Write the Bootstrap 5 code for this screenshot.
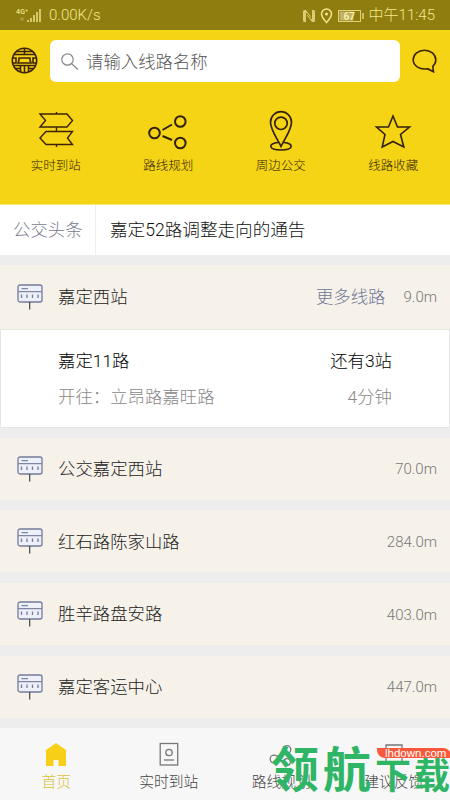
<!DOCTYPE html>
<html lang="zh-CN">
<head>
<meta charset="utf-8">
<meta name="viewport" content="width=device-width, initial-scale=1">
<title>嘉定公交</title>
<link rel="stylesheet" href="https://cdn.jsdelivr.net/npm/bootstrap@5.3.0/dist/css/bootstrap.min.css">
<style>
body{font-family:Roboto,"Noto Sans CJK SC",sans-serif;font-size:17.4px;line-height:1;font-weight:300;color:#222;background:#ededed}
svg{display:block;fill:none;flex:none}
.app{width:450px;height:800px}
.status{height:30px;background:#8f7d0f;color:#f3e78c;padding:2px 15px 0 16px;font-size:15px}
.hero{height:175px;background:#f5d415;color:#33230a;border-bottom:1px solid #fbe96a}
.search{width:350px;height:42px;border-radius:6px;color:#555;padding:3px 0 0 11px;gap:7px}
.search-row{padding:10px 13px 0 11px;height:52px}
.shortcuts{padding-top:25px;font-size:12.5px}
.shortcuts .item{width:112.5px;padding-right:1px}
.shortcuts .item span{margin-top:9px}
.shortcuts svg{height:44px}
.news{height:50px;margin-bottom:10px}
.news .tag{width:96px;padding:2px 0 0 13px;color:#77798f;border-right:1px solid #eee}
.news .title{padding:2px 0 0 14px;color:#111;font-size:17.6px}
.stop{height:62px;background:#f6f2ea;padding:0 13px 0 17px;margin-bottom:10.6px}
.stop span{padding-top:2px}
.stop.open{height:64px;margin:0}
.stop .name{margin-left:15px}
.more{color:#6f7696;margin-right:18px}
.dist{color:#777;font-size:15px}
.line-card{height:99px;border:1px solid #e6e6e6;padding:23px 57px 0 57px;margin-bottom:10px}
.line-card .route{color:#000}
.line-card .sub{color:#888;margin-top:19px}
.tabs{height:72px;background:#f7f7f7;font-size:14.8px;color:#444}
.tabs .item{width:112.5px;padding-top:13px}
.tabs .item span{margin-top:9px}
.tabs .on{color:#d8c235}
.wm{left:271px;top:743px;font-size:48px;line-height:55px;font-weight:700;color:#2fb566;width:179px;height:57px;white-space:nowrap}
.wm i{flex:none;width:52px;font-style:normal}
.wm i.low{width:39px;font-size:36px;padding-top:7px}
.wm-tag{left:377px;top:748px;width:74px;height:10px;background:#f9583a;color:#fff;font:11.5px/10px "Liberation Sans",sans-serif;padding-left:8px;border-radius:0 8px 0 8px}
</style>
<script src="https://cdn.jsdelivr.net/npm/bootstrap@5.3.0/dist/js/bootstrap.bundle.min.js"></script>
</head>
<body>
<svg width="0" height="0" class="position-absolute">
<symbol id="sign" viewBox="0 0 26 26"><rect x="1" y="1" width="24" height="17" rx="2" fill="#edf0f8" stroke="#747b9b" stroke-width="1.3"/><path d="M1 7.700H25M4.500 4.700H11" stroke="#7f86a4" stroke-width="1.200"/><path d="M4.500 10.500V14M10 10.500V14M15.500 10.500V14M21 10.500V14" stroke="#747b9b" stroke-width="1.300"/><path d="M12.700 18V25.500" stroke="#444" stroke-width="1.200"/></symbol>
</svg>
<div class="app d-flex flex-column position-relative overflow-hidden">
<div class="status d-flex align-items-center justify-content-between">
 <div class="d-flex align-items-center">
  <svg width="27" height="18" viewBox="0 0 27 18"><text x="0" y="6.500" font-size="7" font-weight="500" fill="#f3e78c" textLength="12">4G⁺</text><path d="M12 13V15M15 11V15M18 8V15M21 5V15M24 2V15" stroke="#f3e78c" stroke-width="1.400"/><circle cx="6" cy="12" r="2" fill="#a99637"/></svg>
  <span style="margin-left:6px">0.00K/s</span>
 </div>
 <div class="d-flex align-items-center">
  <svg width="14" height="14" viewBox="0 0 14 14"><path d="M4 1H2.500Q1 1 1 2.500V11.500Q1 13 2.500 13H4V5L10 13H11.500Q13 13 13 11.500V2.500Q13 1 11.500 1H10V9L4 1Z" fill="#dccd72"/><path d="M4.500 12V4L9.500 10V2" stroke="#8f7d0f" stroke-width="1"/></svg>
  <svg class="ms-1" width="13" height="16" viewBox="0 0 13 16"><path d="M6.500 14.500C4 11.500 1.500 9 1.500 6A5 5 0 0 1 11.500 6C11.500 9 9 11.500 6.500 14.500Z" stroke="#f3e78c" stroke-width="1.500"/><circle cx="6.500" cy="6" r="1.500" fill="#f3e78c"/></svg>
  <svg class="ms-1" width="28" height="14" viewBox="0 0 28 14"><rect x="1.500" y="1.500" width="22" height="11" stroke="#e0d27b"/><rect x="2.500" y="2.500" width="14" height="9" fill="#c2b367"/><path d="M26 4V10" stroke="#e0d27b" stroke-width="1.500"/><text x="6.500" y="10.800" font-size="10" font-weight="500" fill="#fff5b0">67</text></svg>
  <span style="margin-left:4px">中午11:45</span>
 </div>
</div>
<header class="hero">
 <div class="search-row d-flex align-items-center justify-content-between">
  <svg width="27" height="27" viewBox="0 0 27 27" stroke="#3c2206" stroke-width="1.600"><circle cx="13.500" cy="13.500" r="12.200"/><path d="M13.500 1V7.500M5 4.500H22M3 7.500H24M2 11H5V16H2M25 11H22V16H25M8 11H19V13L20 16H7L8 13ZM3 18.500H24M5 21.500H10M13.500 18.500V26M17 21.500H22M9.500 19V25M17.500 19V25"/></svg>
  <div class="search bg-white d-flex align-items-center">
   <svg width="18" height="18" viewBox="0 0 18 18" stroke="#888" stroke-width="1.200"><circle cx="6.500" cy="6.500" r="5.700"/><path d="M10.700 10.700L17 16.500"/></svg>
   <span>请输入线路名称</span>
  </div>
  <svg width="25" height="25" viewBox="0 0 25 25"><path d="M21.500 23.800L20.800 18.300C22.800 16.500 23.800 14.500 23.800 12C23.800 6.300 18.500 2.200 12.500 2.200S1.200 6.300 1.200 11.800C1.200 18 8 22 15.500 20.700Z" stroke="#3c2206" stroke-width="1.600"/></svg>
 </div>
 <div class="shortcuts d-flex">
  <div class="item d-flex flex-column align-items-center">
   <svg width="38" height="44" viewBox="0 0 38 44" stroke="#3c2206" stroke-width="1.400"><path d="M3 7H30L35.500 13.500L30 20H3L8.500 13.500ZM35.500 24.500H9L3 31L9 37.500H35.500L30.500 31ZM19.500 5V7M19.500 20V24.500M19.500 37.500V40"/></svg>
   <span>实时到站</span></div>
  <div class="item d-flex flex-column align-items-center">
   <svg width="40" height="44" viewBox="0 0 40 44" stroke="#33210c" stroke-width="2"><circle cx="6.500" cy="26" r="5.300"/><circle cx="32.300" cy="14.500" r="5.300"/><circle cx="32.300" cy="36" r="5.300"/><path d="M14.500 23L24 17.500M14.500 29L24 33"/></svg>
   <span>路线规划</span></div>
  <div class="item d-flex flex-column align-items-center">
   <svg width="24" height="44" viewBox="0 0 24 44" stroke="#33210c" stroke-width="1.700"><path d="M12 39.500C8 31 1.500 23 1.500 15.300A10.500 10.700 0 0 1 22.500 15.300C22.500 23 16 31 12 39.500Z"/><circle cx="12" cy="16.300" r="6.200"/><path d="M9 35.500C-1 36.500 -1 43 12 43S25 36.500 15 35.500"/></svg>
   <span>周边公交</span></div>
  <div class="item d-flex flex-column align-items-center">
   <svg width="38" height="44" viewBox="0 0 38 44" stroke="#33210c" stroke-width="1.600"><path d="M19 9L23.500 20H35.500L26.500 27.500L29.800 40L19 34.500L8.200 40L11 27.500L2.500 20H14.500Z"/></svg>
   <span>线路收藏</span></div>
 </div>
</header>
<section class="news bg-white d-flex flex-shrink-0">
 <div class="tag d-flex align-items-center">公交头条</div>
 <div class="title d-flex align-items-center">嘉定52路调整走向的通告</div>
</section>
<main class="flex-grow-1 overflow-hidden">
 <div class="stop open d-flex align-items-center"><svg width="26" height="26"><use href="#sign"/></svg><span class="name">嘉定西站</span><span class="more ms-auto">更多线路</span><span class="dist">9.0m</span></div>
 <div class="line-card bg-white">
  <div class="route d-flex justify-content-between"><span>嘉定11路</span><span>还有3站</span></div>
  <div class="sub d-flex justify-content-between"><span>开往：立昂路嘉旺路</span><span>4分钟</span></div>
 </div>
 <div class="stop d-flex align-items-center"><svg width="26" height="26"><use href="#sign"/></svg><span class="name">公交嘉定西站</span><span class="dist ms-auto">70.0m</span></div>
 <div class="stop d-flex align-items-center"><svg width="26" height="26"><use href="#sign"/></svg><span class="name">红石路陈家山路</span><span class="dist ms-auto">284.0m</span></div>
 <div class="stop d-flex align-items-center"><svg width="26" height="26"><use href="#sign"/></svg><span class="name">胜辛路盘安路</span><span class="dist ms-auto">403.0m</span></div>
 <div class="stop d-flex align-items-center"><svg width="26" height="26"><use href="#sign"/></svg><span class="name">嘉定客运中心</span><span class="dist ms-auto">447.0m</span></div>
</main>
<nav class="tabs d-flex flex-shrink-0">
 <div class="item on d-flex flex-column align-items-center"><svg width="24" height="25" viewBox="0 0 24 25"><path d="M12 2L22 9V25H14.500V19H9.500V25H2V9Z" fill="#f8cf18"/></svg><span>首页</span></div>
 <div class="item d-flex flex-column align-items-center"><svg width="20" height="25" viewBox="0 0 20 25" stroke="#777" stroke-width="1.300"><rect x="1.200" y="2.500" width="17.500" height="21.500"/><circle cx="10" cy="11.500" r="3.200"/><path d="M5 19H15"/></svg><span>实时到站</span></div>
 <div class="item d-flex flex-column align-items-center"><svg width="24" height="25" viewBox="0 0 24 25" stroke="#777" stroke-width="1.300"><circle cx="5" cy="18" r="3.800"/><circle cx="18" cy="8.500" r="3.800"/><circle cx="18" cy="21" r="3.300"/><path d="M8 15.500L15 11M9 19L14 20"/></svg><span>路线规划</span></div>
 <div class="item d-flex flex-column align-items-center"><svg width="22" height="25" viewBox="0 0 22 25" stroke="#777" stroke-width="1.300"><path d="M3 4H19V22H3Z"/></svg><span>建议反馈</span></div>
</nav>
<div class="wm position-absolute overflow-hidden d-flex"><i>领</i><i>航</i><i class="low">下</i><i class="low">载</i></div>
<div class="wm-tag position-absolute">lhdown.com</div>
</div>
</body>
</html>
